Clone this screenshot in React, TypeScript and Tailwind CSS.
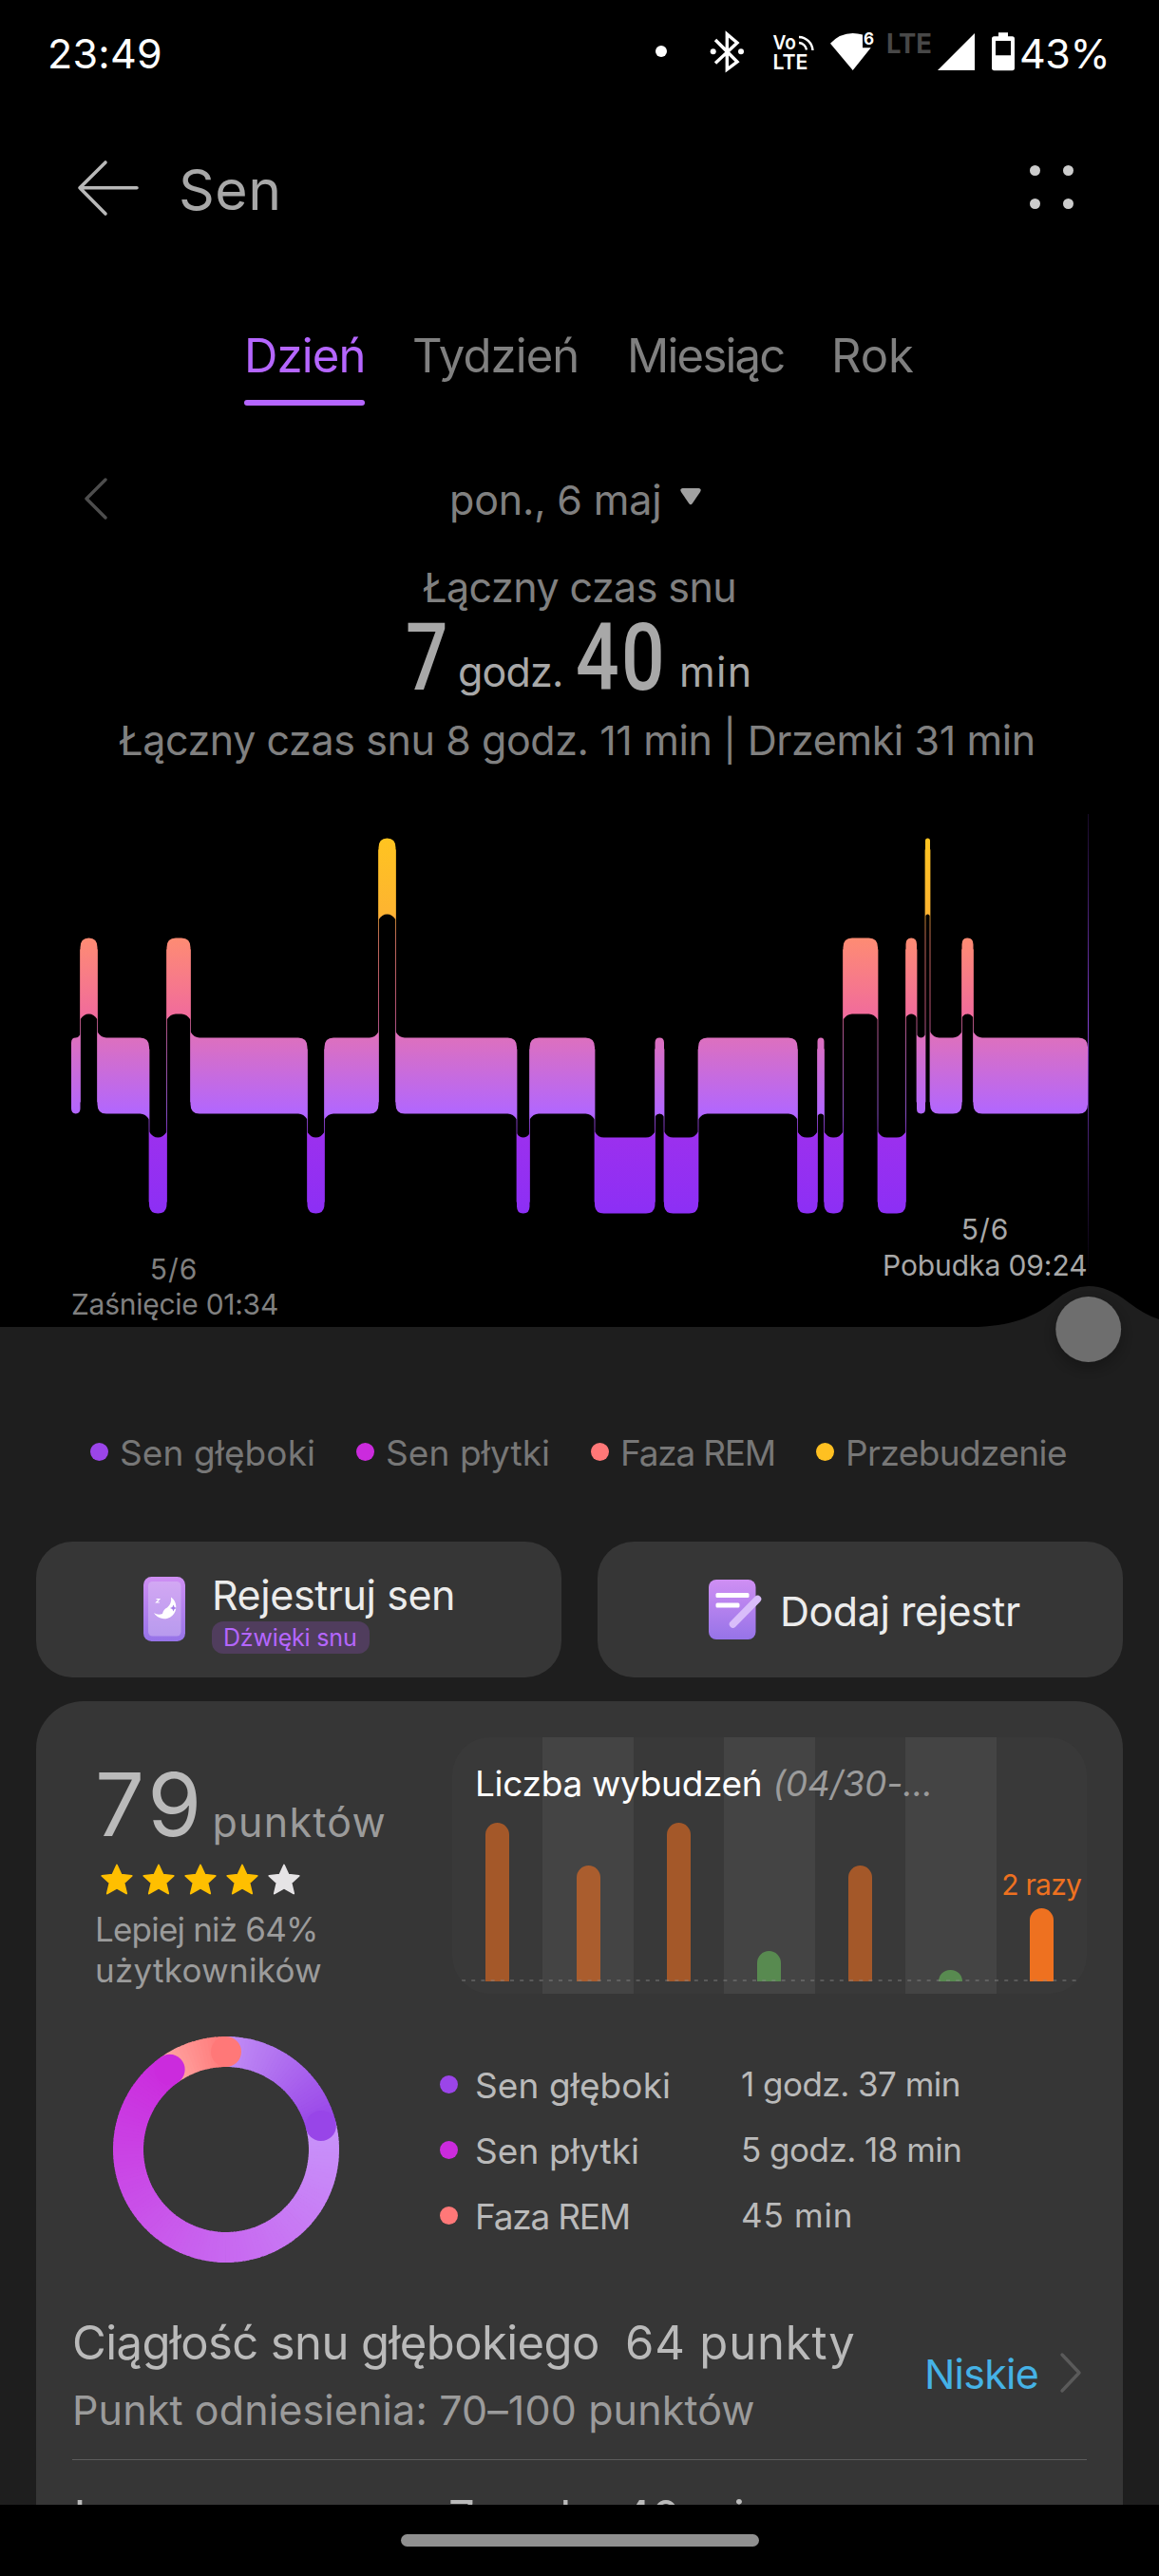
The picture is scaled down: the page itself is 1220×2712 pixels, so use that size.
import React from 'react';

type Stage = 'awake' | 'rem' | 'light' | 'deep';

type Segment = {
  stage: Stage;
  start: number;
  end: number;
};

const STAGE_TOP: Record<Stage, number> = {
  awake: 882.4,
  rem: 987.4,
  light: 1092.4,
  deep: 1197.6,
};

const STAGE_HEIGHT = 80;

const segments: Segment[] = [
  { stage: 'light', start: 75, end: 84.5 },
  { stage: 'rem', start: 84.5, end: 102.5 },
  { stage: 'light', start: 102.5, end: 157 },
  { stage: 'deep', start: 157, end: 175.5 },
  { stage: 'rem', start: 175.5, end: 200.5 },
  { stage: 'light', start: 200.5, end: 323.5 },
  { stage: 'deep', start: 323.5, end: 341.5 },
  { stage: 'light', start: 341.5, end: 398.5 },
  { stage: 'awake', start: 398.5, end: 416.5 },
  { stage: 'light', start: 416.5, end: 544 },
  { stage: 'deep', start: 544, end: 557.5 },
  { stage: 'light', start: 557.5, end: 626 },
  { stage: 'deep', start: 626, end: 689.5 },
  { stage: 'light', start: 689.5, end: 699 },
  { stage: 'deep', start: 699, end: 735 },
  { stage: 'light', start: 735, end: 839.5 },
  { stage: 'deep', start: 839.5, end: 860.5 },
  { stage: 'light', start: 860.5, end: 867.5 },
  { stage: 'deep', start: 867.5, end: 887.5 },
  { stage: 'rem', start: 887.5, end: 924 },
  { stage: 'deep', start: 924, end: 953.5 },
  { stage: 'rem', start: 953.5, end: 965 },
  { stage: 'light', start: 965, end: 974 },
  { stage: 'awake', start: 974, end: 979 },
  { stage: 'light', start: 979, end: 1012.5 },
  { stage: 'rem', start: 1012.5, end: 1024.5 },
  { stage: 'light', start: 1024.5, end: 1145 },
];

const legend = [
  { label: 'Sen głęboki', dot: 'bg-[#9b45e9]', width: 'w-[280px]', tracking: 'tracking-[0.003em]' },
  { label: 'Sen płytki', dot: 'bg-[#cb2bdd]', width: 'w-[247px]', tracking: 'tracking-[0.003em]' },
  { label: 'Faza REM', dot: 'bg-[#ff7878]', width: 'w-[237px]', tracking: 'tracking-[-0.033em]' },
  { label: 'Przebudzenie', dot: 'bg-[#ffc021]', width: 'w-[270px]', tracking: 'tracking-[-0.016em]' },
];

const phases = [
  { label: 'Sen głęboki', value: '1 godz. 37 min', dot: 'bg-[#9b45e9]', tracking: 'tracking-[0.003em]', valueTracking: 'tracking-[-0.015em]' },
  { label: 'Sen płytki', value: '5 godz. 18 min', dot: 'bg-[#cb2bdd]', tracking: 'tracking-[0.003em]', valueTracking: 'tracking-[-0.015em]' },
  { label: 'Faza REM', value: '45 min', dot: 'bg-[#ff7878]', tracking: 'tracking-[-0.033em]', valueTracking: 'tracking-[0.022em]' },
];

const wakeups = [
  { height: 167, color: 'bg-[#a45829]' },
  { height: 122, color: 'bg-[#aa5d2e]' },
  { height: 167, color: 'bg-[#a45829]' },
  { height: 32, color: 'bg-[#588a50]' },
  { height: 122, color: 'bg-[#a45829]' },
  { height: 12, color: 'bg-[#588a50]' },
  { height: 77, color: 'bg-[#ee7120]', label: '2 razy' },
];

// Box outline: a corner flares out towards a neighbouring stage, otherwise it is rounded off
function segmentPath(index: number) {
  const { stage, start: l, end: r } = segments[index];
  const t = STAGE_TOP[stage];
  const b = t + STAGE_HEIGHT;
  const prev = segments[index - 1];
  const next = segments[index + 1];
  const rx = Math.min(9.5, (r - l) / 2);
  const ry = Math.min(10, rx * 1.15);
  const flare = -rx * 0.65;

  const above = (s?: Segment) => !!s && STAGE_TOP[s.stage] < t;
  const below = (s?: Segment) => !!s && STAGE_TOP[s.stage] > t;

  const tl = above(prev) ? flare : ry;
  const tr = above(next) ? flare : ry;
  const br = below(next) ? flare : ry;
  const bl = below(prev) ? flare : ry;
  const inset = (corner: number) => (corner < 0 ? rx * 0.4 : 0);

  return [
    `M${l} ${t + tl}`,
    `Q${l + inset(tl)} ${t} ${l + rx} ${t}`,
    `L${r - rx} ${t}`,
    `Q${r - inset(tr)} ${t} ${r} ${t + tr}`,
    `L${r} ${b - br}`,
    `Q${r - inset(br)} ${b} ${r - rx} ${b}`,
    `L${l + rx} ${b}`,
    `Q${l + inset(bl)} ${b} ${l} ${b - bl}`,
    'Z',
  ].join(' ');
}

function StatusBar() {
  return (
    <div className="flex h-[113px] items-center pl-[50px] text-[43px] text-white">
      <span className="w-[630px] tracking-[0.006em]">23:49</span>
      <svg width="393" height="113" viewBox="680 0 393 113" className="shrink-0" fill="#fff">
        <circle cx="696" cy="54" r="6" />
        <path d="M753 42 L776 65 L765.3 73 L765.3 36 L776 45 L753 66.5" fill="none" stroke="#fff" strokeWidth="3.4" strokeLinejoin="miter" />
        <circle cx="750.7" cy="54.3" r="3" />
        <circle cx="780" cy="54.3" r="3" />
        <text x="813.5" y="51.7" fontFamily="Inter" fontWeight="600" fontSize="20.5" textLength="24.5" lengthAdjust="spacingAndGlyphs">Vo</text>
        <text x="813.5" y="73.3" fontFamily="Inter" fontWeight="600" fontSize="22" textLength="37" lengthAdjust="spacingAndGlyphs">LTE</text>
        <path d="M841 39 A15 15 0 0 1 855.5 53 M841 45 A9 9 0 0 1 849 52.5" fill="none" stroke="#fff" strokeWidth="2.4" />
        <path d="M874 45.7 Q884 35 897.7 35 Q903 35 908 36.5 V50.3 H916.7 L897.7 74 Z" />
        <text x="909" y="47.3" fontFamily="Inter" fontWeight="700" fontSize="17">6</text>
        <text x="933" y="55.7" fill="#484848" fontFamily="Inter" fontWeight="700" fontSize="28.5" textLength="48" lengthAdjust="spacingAndGlyphs">LTE</text>
        <path d="M987 74 H1026 V35 Z" />
        <path fillRule="evenodd" d="M1051 34.3 H1061 V38.3 H1065.5 Q1068 38.3 1068 41 V71.5 Q1068 74.3 1065.5 74.3 H1046.5 Q1044 74.3 1044 71.5 V41 Q1044 38.3 1046.5 38.3 H1051 Z M1048 43 V58.3 H1064 V43 Z" />
      </svg>
      <span className="tracking-[-0.01em]">43%</span>
    </div>
  );
}

function Header() {
  return (
    <header className="flex h-[175px] items-center pl-[80px] pr-[90px]">
      <svg width="68" height="64" viewBox="80 166 68 64" fill="none" stroke="#b8b8b8" strokeWidth="3.6" strokeLinecap="round" strokeLinejoin="round" className="mb-[5px]">
        <path d="M111 171 L84 197.7 L111 225 M84 197.7 H144" />
      </svg>
      <h1 className="ml-10 grow text-[59px] tracking-[0.008em] text-[#a8a8a8]">Sen</h1>
      <div className="mb-2 grid grid-cols-2 gap-6">
        {[0, 1, 2, 3].map((i) => (
          <span key={i} className="h-[11px] w-[11px] rounded-full bg-[#cccccc]" />
        ))}
      </div>
    </header>
  );
}

function Tabs() {
  return (
    <nav className="flex h-[139px] pl-[257px] pt-[55px] text-[49px] leading-[64px] text-[#808080]">
      <div className="w-[177px]">
        <div className="tracking-[-0.017em] text-[#b566ff]">Dzień</div>
        <div className="mt-[14px] h-[6px] w-[127px] rounded-full bg-[#b566ff]" />
      </div>
      <div className="w-[226px] tracking-[-0.018em]">Tydzień</div>
      <div className="w-[215px] tracking-[-0.036em]">Miesiąc</div>
      <div className="tracking-[-0.002em]">Rok</div>
    </nav>
  );
}

function Summary() {
  return (
    <>
      <div className="mt-[50px] flex h-[99px] items-center pl-[88px] text-[43px] text-[#808080]">
        <svg width="26" height="46" viewBox="0 0 26 46" fill="none" stroke="#4d4d4d" strokeWidth="3.4" strokeLinecap="round" strokeLinejoin="round" className="mb-1">
          <path d="M23 3 L3 23 L23 43" />
        </svg>
        <span className="ml-[359px] tracking-[-0.004em]">pon., 6 maj</span>
        <svg width="24" height="20" viewBox="0 0 24 20" fill="#a0a0a0" className="mb-2 ml-[19px]">
          <path d="M3.5 1 H20.5 Q24 1.5 22 5 L13.8 17 Q12 19.4 10.2 17 L2 5 Q0 1.5 3.5 1 Z" />
        </svg>
      </div>
      <div className="mt-3 h-[61px] pl-[445px] text-[43px] leading-[61px] tracking-[-0.013em] text-[#808080]">Łączny czas snu</div>
      <div className="flex h-[84px] pl-[427px] text-[43px] leading-[60px] text-[#a8a8a8]">
        <span className="mt-1 w-[55px] origin-left scale-x-[0.8] font-['Roboto'] text-[98px] font-medium leading-[80px]">7</span>
        <span className="mt-7 w-[124px] tracking-[-0.019em]">godz.</span>
        <span className="mt-1 w-[109px] origin-left scale-x-[0.82] font-['Roboto'] text-[98px] font-medium leading-[80px] tracking-[0.03em]">40</span>
        <span className="mt-7 tracking-[0.03em]">min</span>
      </div>
      <div className="h-[93px] whitespace-nowrap pl-[125px] text-[43px] leading-[93px] tracking-[-0.0095em] text-[#808080]">
        Łączny czas snu 8 godz. 11 min | Drzemki 31 min
      </div>
    </>
  );
}

function SleepChart() {
  return (
    <section className="relative z-10 h-[571px]">
      <svg width="1220" height="571" viewBox="0 826 1220 571" className="overflow-visible">
        <defs>
          <linearGradient id="stages" gradientUnits="userSpaceOnUse" x1="0" x2="0" y1="882" y2="1278">
            <stop offset="0" stopColor="#ffc420" />
            <stop offset="0.2" stopColor="#fdb431" />
            <stop offset="0.265" stopColor="#fe8c73" />
            <stop offset="0.468" stopColor="#f16c9b" />
            <stop offset="0.531" stopColor="#dd70be" />
            <stop offset="0.734" stopColor="#b166ff" />
            <stop offset="0.797" stopColor="#9b30ee" />
            <stop offset="1" stopColor="#8c2ff5" />
          </linearGradient>
          <linearGradient id="cursor" gradientUnits="userSpaceOnUse" x1="0" x2="0" y1="857" y2="1345">
            <stop offset="0" stopColor="#7a35c8" stopOpacity="0.2" />
            <stop offset="0.45" stopColor="#8a45dd" stopOpacity="0.95" />
            <stop offset="1" stopColor="#7a35c8" stopOpacity="0" />
          </linearGradient>
          <filter id="knob-shadow" x="-50%" y="-50%" width="200%" height="200%">
            <feDropShadow dx="0" dy="6" stdDeviation="9" floodColor="#000" floodOpacity="0.3" />
          </filter>
        </defs>

        <g fill="url(#stages)">
          {segments.map((s, i) => (
            <path key={i} d={segmentPath(i)} />
          ))}
          {segments.slice(1).map((s, i) => {
            const a = STAGE_TOP[segments[i].stage];
            const b = STAGE_TOP[s.stage];
            const top = Math.min(a, b) + 12;
            return <rect key={i} x={s.start - 0.5} y={top} width="1" height={Math.abs(a - b) + 56} opacity="0.75" />;
          })}
        </g>

        <rect x="1145" y="857" width="1" height="488" fill="url(#cursor)" />
        <path d="M1030 1397 C1070 1395 1092 1384 1110 1369.5 Q1128 1354 1146 1354 Q1166 1354 1187 1370.5 Q1206 1385 1220 1389 V1398 H1030 Z" fill="#1e1e1e" />
        <circle cx="1145.7" cy="1399.5" r="34.4" fill="#6e6e6e" filter="url(#knob-shadow)" />
      </svg>
      <div className="absolute left-[75px] top-[492px] text-[30px] leading-[37px] text-[#808080]">
        <div className="w-[216px] text-center tracking-[0.033em]">5/6</div>
        <div className="tracking-[-0.009em]">Zaśnięcie 01:34</div>
      </div>
      <div className="absolute left-[929px] top-[449px] text-[30px] leading-[38px] text-[#a8a8a8]">
        <div className="w-[216px] text-center tracking-[0.033em]">5/6</div>
        <div className="tracking-[-0.003em]">Pobudka 09:24</div>
      </div>
    </section>
  );
}

function ActionButtons() {
  return (
    <div className="mt-[63px] flex gap-[38px] px-[38px] text-[43px] text-[#ececec]">
      <button className="flex h-[143px] w-[553px] items-start rounded-[38px] bg-[#363636] pl-[113px] text-left">
        <svg width="44" height="68" viewBox="0 0 44 68" className="mt-[37px]">
          <defs>
            <linearGradient id="tile" x1="0" x2="0" y1="0" y2="1">
              <stop offset="0" stopColor="#cf8ff3" />
              <stop offset="1" stopColor="#9673e8" />
            </linearGradient>
          </defs>
          <rect width="44" height="68" rx="8.5" fill="url(#tile)" />
          <rect x="5" y="5" width="34.5" height="57.5" rx="4.5" fill="#dcc8f5" fillOpacity="0.45" />
          <path d="M29 21.5 A12.5 12.5 0 1 1 11 38 Q15 41 20 39 Q21 34 25 32.5 Q30 28 29 21.5 Z" fill="#fff" />
          <path d="M31.5 29.5 L32.6 32 L35 33 L32.6 34 L31.5 36.5 L30.4 34 L28 33 L30.4 32 Z" fill="#a57ce8" />
          <path d="M13.5 23.5 H16.8 L13.5 27 H16.8" fill="none" stroke="#fff" strokeWidth="1.1" />
        </svg>
        <span className="ml-7 mt-[31px] block">
          <span className="block leading-[50px] tracking-[-0.01em]">Rejestruj sen</span>
          <span className="mt-[3px] block h-[34px] w-[166px] rounded-xl bg-[#503d5d] pl-3 text-[25px] leading-[35px] tracking-[-0.007em] text-[#b566ff]">Dźwięki snu</span>
        </span>
      </button>
      <button className="flex h-[143px] w-[553px] items-center rounded-[38px] bg-[#363636] pl-[117px] text-left">
        <svg width="56" height="63" viewBox="0 0 56 63">
          <rect width="49.5" height="63" rx="8" fill="url(#tile)" />
          <rect x="7.5" y="14" width="35" height="5" rx="1.5" fill="#fff" />
          <rect x="7.5" y="24.5" width="25" height="5" rx="1.5" fill="#fff" />
          <path d="M51.5 20.5 L25.5 47" stroke="#d9bdfa" strokeWidth="7.5" strokeLinecap="round" />
        </svg>
        <span className="ml-[19px] mt-[3px] leading-[60px] tracking-[-0.011em]">Dodaj rejestr</span>
      </button>
    </div>
  );
}

function Score() {
  return (
    <div className="w-[376px] pt-[21px]">
      <div className="flex h-[100px] whitespace-nowrap">
        <span className="text-[92px] leading-[100px] tracking-[0.045em] text-[#bababa]">79</span>
        <span className="ml-[7px] mt-[38px] text-[43px] leading-[60px] tracking-[0.029em] text-[#9b9b9b]">punktów</span>
      </div>
      <div className="ml-[6px] mt-[12px] flex gap-[10px]">
        {[1, 2, 3, 4, 5].map((n) => (
          <svg key={n} width="34" height="33" viewBox="0 0 34 33">
            <path
              d="M17 1.5 L21.6 11.6 L32.7 12.8 L24.5 20.3 L27.2 31.5 L17 25.8 L6.8 31.5 L9.5 20.3 L1.3 12.8 L12.4 11.6 Z"
              fill={n < 5 ? '#ffbf00' : '#e6e4e6'}
              stroke={n < 5 ? '#ffbf00' : '#e6e4e6'}
              strokeWidth="1.8"
              strokeLinejoin="round"
            />
          </svg>
        ))}
      </div>
      <div className="mt-[15px] text-[35px] leading-[43px] text-[#9b9b9b]">
        <div className="tracking-[-0.023em]">Lepiej niż 64%</div>
        <div className="tracking-[0.008em]">użytkowników</div>
      </div>
    </div>
  );
}

function WakeupChart() {
  return (
    <div className="relative flex h-[270px] w-[668px] overflow-hidden rounded-[40px] bg-[#393939]">
      {wakeups.map((bar, i) => (
        <div key={i} className={`flex flex-1 flex-col items-center justify-end pb-[13px] ${i % 2 ? 'bg-[#444444]' : ''}`}>
          {bar.label && <span className="mb-[7px] whitespace-nowrap text-[30px] leading-9 tracking-[-0.025em] text-[#ee7120]">{bar.label}</span>}
          <span className={`w-[25px] rounded-t-full ${bar.color}`} style={{ height: bar.height }} />
        </div>
      ))}
      <svg width="668" height="2" className="absolute bottom-[13px] left-0">
        <path d="M10 1 H658" stroke="#8a8a8a" strokeOpacity="0.55" strokeWidth="1.5" strokeDasharray="4 6.2" />
      </svg>
      <div className="absolute left-6 top-[26px] whitespace-nowrap text-[37px] leading-[46px] tracking-[-0.008em] text-white">
        Liczba wybudzeń
        <span className="ml-[11px] italic tracking-[-0.002em] text-[#9b9b9b]">(04/30-...</span>
      </div>
    </div>
  );
}

const ringArcs = [
  { from: 0, to: 75.9, start: [193, 141, 245], end: [152, 69, 232] },
  { from: 75.9, to: 180, start: [200, 147, 250], end: [200, 104, 240] },
  { from: 180, to: 324.8, start: [200, 104, 240], end: [203, 43, 221] },
  { from: 324.8, to: 360, start: [255, 166, 163], end: [255, 120, 120] },
];

function ringPoint(angle: number) {
  const rad = (angle * Math.PI) / 180;
  return [119 + 103 * Math.sin(rad), 119 - 103 * Math.cos(rad)];
}

function StageRing() {
  const steps = ringArcs.flatMap((arc) => {
    const count = Math.ceil((arc.to - arc.from) / 2);
    return Array.from({ length: count }, (_, i) => {
      const k = i / (count - 1);
      const a0 = arc.from + ((arc.to - arc.from) * i) / count;
      const a1 = arc.from + ((arc.to - arc.from) * (i + 1)) / count + (i < count - 1 ? 0.5 : 0);
      const [x0, y0] = ringPoint(a0);
      const [x1, y1] = ringPoint(a1);
      const rgb = arc.start.map((c, n) => Math.round(c + (arc.end[n] - c) * k));
      return { d: `M${x0} ${y0} A103 103 0 0 1 ${x1} ${y1}`, color: `rgb(${rgb.join(',')})` };
    });
  });
  const caps = [
    { angle: 75.9, color: '#9845e8' },
    { angle: 324.8, color: '#cb2bdd' },
    { angle: 360, color: '#ff7878' },
  ];

  return (
    <svg width="238" height="238" viewBox="0 0 238 238">
      {steps.map((s, i) => (
        <path key={i} d={s.d} stroke={s.color} strokeWidth="32" fill="none" />
      ))}
      {caps.map((cap) => {
        const [cx, cy] = ringPoint(cap.angle);
        return <circle key={cap.angle} cx={cx} cy={cy} r="16" fill={cap.color} />;
      })}
    </svg>
  );
}

function DetailsCard() {
  return (
    <section className="mx-[38px] mt-[25px] h-[846px] overflow-hidden rounded-t-[50px] bg-[#363636]">
      <div className="flex h-[308px] pl-[62px] pt-[38px]">
        <Score />
        <WakeupChart />
      </div>

      <div className="mt-[45px] flex pl-[81px]">
        <StageRing />
        <div className="ml-[106px] mt-[17px] text-[#bababa]">
          {phases.map((p) => (
            <div key={p.label} className="flex h-[69px] items-center">
              <span className={`mb-[3px] h-[19px] w-[19px] rounded-full ${p.dot}`} />
              <span className={`ml-[18px] w-[280px] text-[37px] ${p.tracking}`}>{p.label}</span>
              <span className={`mb-[2px] text-[35px] ${p.valueTracking}`}>{p.value}</span>
            </div>
          ))}
        </div>
      </div>

      <div className="mx-[38px] flex h-[208px] border-b border-[#5c5c5c] pt-[55px]">
        <div className="w-[897px]">
          <div className="flex whitespace-nowrap text-[49px] leading-[60px] text-[#bababa]">
            <span className="w-[582px] tracking-[-0.012em]">Ciągłość snu głębokiego</span>
            <span className="tracking-[0.017em]">64 punkty</span>
          </div>
          <div className="mt-[10px] text-[43px] leading-[60px] tracking-[0.003em] text-[#9b9b9b]">Punkt odniesienia: 70–100 punktów</div>
        </div>
        <div className="flex h-[125px] items-center">
          <span className="text-[43px] tracking-[-0.018em] text-[#45b2e6]">Niskie</span>
          <svg width="24" height="44" viewBox="0 0 24 44" fill="none" stroke="#5a5a5a" strokeWidth="3.4" strokeLinecap="round" strokeLinejoin="round" className="mb-1 ml-[22px]">
            <path d="M3 3 L21 22 L3 41" />
          </svg>
        </div>
      </div>

      <div className="ml-[38px] mt-[31px] flex text-[49px] leading-[60px] text-[#bababa]">
        <span className="w-[396px] tracking-[-0.012em]">Łączny czas snu</span>
        <span className="tracking-[-0.009em]">7 godz. 40 min</span>
      </div>
    </section>
  );
}

export default function App() {
  return (
    <main className="flex h-[2712px] w-[1220px] flex-col overflow-hidden bg-black font-['Inter',sans-serif]">
      <StatusBar />
      <Header />
      <Tabs />
      <Summary />
      <SleepChart />

      <div className="h-[1240px] shrink-0 bg-[#1e1e1e]">
        <div className="flex h-[163px] items-end pl-[95px]">
          {legend.map((item) => (
            <div key={item.label} className={`flex h-[60px] items-center ${item.width}`}>
              <span className={`mb-[3px] h-[19px] w-[19px] rounded-full ${item.dot}`} />
              <span className={`ml-3 text-[37px] text-[#777777] ${item.tracking}`}>{item.label}</span>
            </div>
          ))}
        </div>
        <ActionButtons />
        <DetailsCard />
      </div>

      <footer className="flex h-[75px] shrink-0 justify-center bg-black pt-[31px]">
        <div className="h-[13px] w-[377px] rounded-full bg-[#8f8f8f]" />
      </footer>
    </main>
  );
}
